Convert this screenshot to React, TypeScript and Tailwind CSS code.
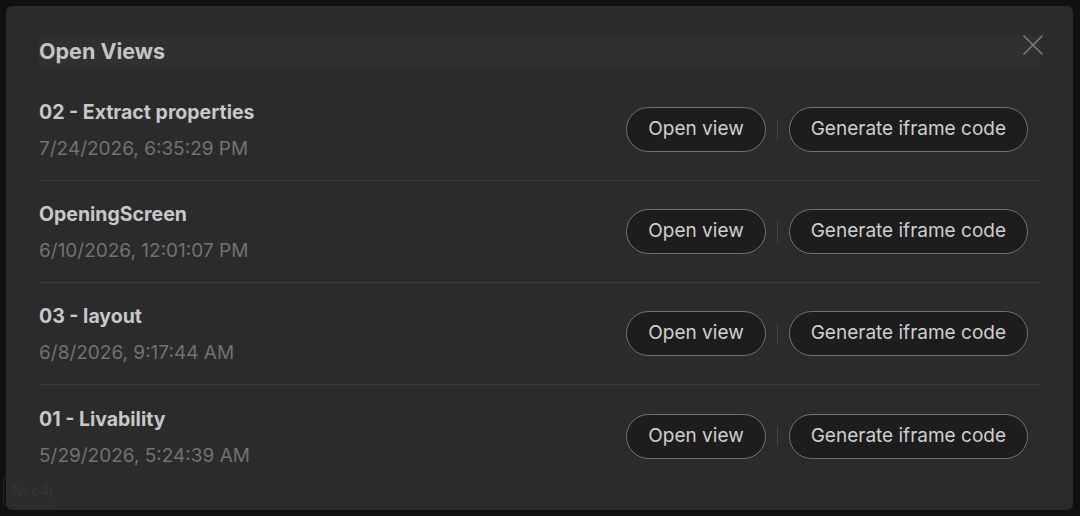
import { X } from 'lucide-react'

const VIEWS = [
  { name: '02 - Extract properties', date: '7/24/2026, 6:35:29 PM' },
  { name: 'OpeningScreen', date: '6/10/2026, 12:01:07 PM' },
  { name: '03 - layout', date: '6/8/2026, 9:17:44 AM' },
  { name: '01 - Livability', date: '5/29/2026, 5:24:39 AM' },
]

export default function App() {
  return (
    <div className="relative h-[516px] w-[1080px] overflow-hidden bg-[#111111] p-[6px] font-['Inter',sans-serif]">
      {/* faint element behind the backdrop */}
      <div className="absolute bottom-[10px] left-[3px] z-20 rounded border border-[#3a3a3a]/40 px-2 py-1 text-sm font-bold text-[#3a3a3a]/50">
        Neo4j
      </div>

      <div className="relative flex h-[504px] w-[1067px] flex-col rounded-md bg-[#2b2b2b] px-[33px] pt-[29px]">
        <button className="absolute right-[22px] top-[21px] text-[#7a7a7a]">
          <X className="h-[36px] w-[36px]" strokeWidth={1.1} />
        </button>

        {/* header */}
        <div className="flex h-[33px] w-[1001px] items-center bg-[#303030]">
          <h2 className="text-[21.5px] font-bold text-[#c4c4c4]">Open Views</h2>
        </div>

        {/* list */}
        <div className="mt-[11px] flex flex-col">
          {VIEWS.map((view, index) => (
            <div
              key={view.name}
              className={`flex h-[102px] w-[1001px] items-center justify-between ${index < VIEWS.length - 1 ? 'border-b border-[#3c3c3c]' : ''}`}
            >
              <div className="flex flex-col gap-[11px] pt-[2px]">
                <span className="text-[19.5px] font-bold leading-[26px] text-[#c8c8c8]">{view.name}</span>
                <span className="text-[19px] leading-[26px] text-[#727272]">{view.date}</span>
              </div>

              <div className="mr-[12px] flex items-center">
                <button className="h-[45px] rounded-full border border-[#727272] bg-[#1d1d1d] px-[21px] text-[19px] text-[#cfcfcf]">
                  Open view
                </button>
                <div className="mx-[11px] h-[20px] w-px bg-[#454545]" />
                <button className="h-[45px] rounded-full border border-[#727272] bg-[#1d1d1d] px-[21px] text-[19px] text-[#cfcfcf]">
                  Generate iframe code
                </button>
              </div>
            </div>
          ))}
        </div>
      </div>
    </div>
  )
}
